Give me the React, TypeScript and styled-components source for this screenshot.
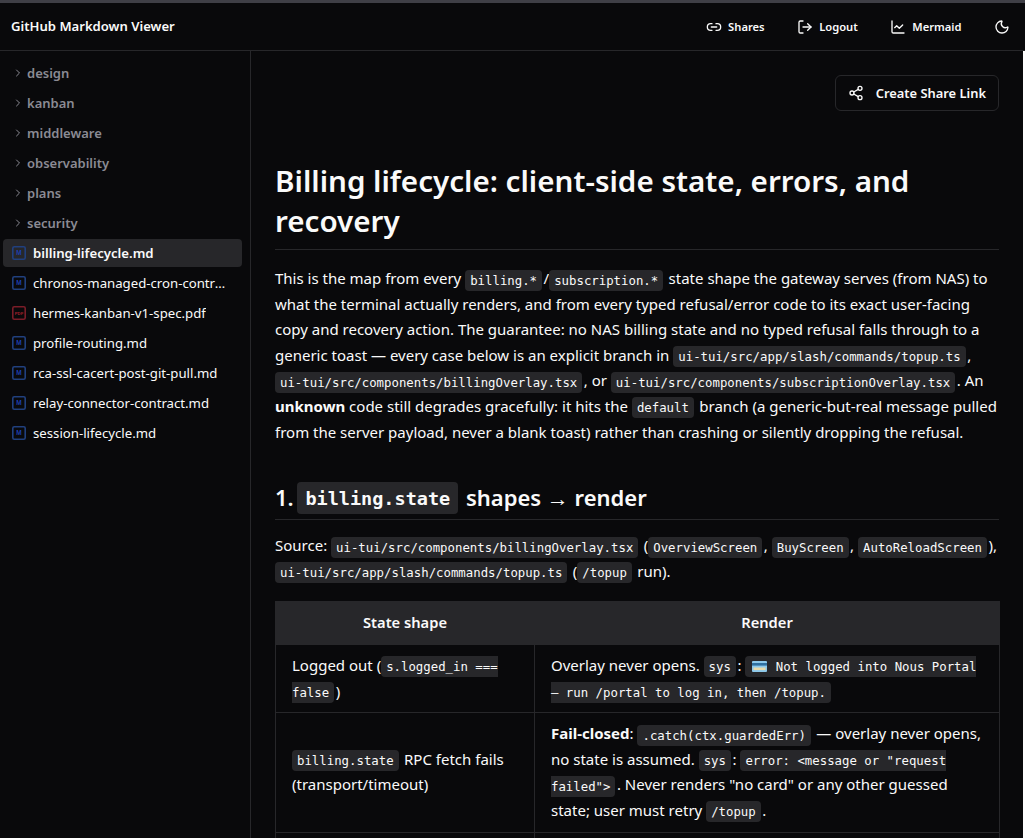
import styled, { createGlobalStyle } from "styled-components";
import { ChartLine, ChevronRight, Link2, LogOut, Moon, Share2 } from "lucide-react";

const GlobalStyle = createGlobalStyle`
    * {
        box-sizing: border-box;
    }

    body {
        margin: 0;
        background: #09090b;
        color: #fafafa;
        font-family: "Noto Sans", "Open Sans", sans-serif;
        font-size: 15px;
        line-height: 25.6px;
    }
`;

const folders = ["design", "kanban", "middleware", "observability", "plans", "security"];

const files = [
    { name: "billing-lifecycle.md", kind: "md", active: true },
    { name: "chronos-managed-cron-contract.md", kind: "md" },
    { name: "hermes-kanban-v1-spec.pdf", kind: "pdf" },
    { name: "profile-routing.md", kind: "md" },
    { name: "rca-ssl-cacert-post-git-pull.md", kind: "md" },
    { name: "relay-connector-contract.md", kind: "md" },
    { name: "session-lifecycle.md", kind: "md" },
];

const FileIcon = ({ kind }: { kind: string }) => {
    const stroke = kind === "pdf" ? "#7a1d28" : "#21407e";
    const fill = kind === "pdf" ? "#a3202c" : "#1d3fae";
    return (
        <FileSvg viewBox="0 0 14 14">
            <rect x="0.8" y="0.8" width="12.4" height="12.4" rx="1.5" fill="none" stroke={stroke} strokeWidth="1.6"/>
            <text x="7" y="9.2" textAnchor="middle" fontSize={kind === "pdf" ? 4.2 : 6.5} fontWeight="700" fill={fill}>
                {kind === "pdf" ? "PDF" : "M"}
            </text>
        </FileSvg>
    );
};

const CardEmoji = () => (
    <EmojiSvg viewBox="0 0 15 11">
        <rect x="0" y="0" width="15" height="11" rx="1" fill="#8cc8ea"/>
        <rect x="0" y="2" width="15" height="2.6" fill="#2f6f9f"/>
        <rect x="1.5" y="6.5" width="12" height="2.6" fill="#e8d9a8"/>
    </EmojiSvg>
);

export default function App() {
    return (
        <Page>
            <GlobalStyle/>
            <TopStrip/>
            <Header>
                <Title>GitHub Markdown Viewer</Title>
                <Nav>
                    <NavButton><Link2 size={16}/>Shares</NavButton>
                    <NavButton><LogOut size={16}/>Logout</NavButton>
                    <NavButton><ChartLine size={16}/>Mermaid</NavButton>
                    <NavButton><Moon size={16}/></NavButton>
                </Nav>
            </Header>
            <Body>
                <Sidebar>
                    {folders.map((name) => (
                        <FolderRow key={name}>
                            <ChevronRight size={12}/>
                            <span>{name}</span>
                        </FolderRow>
                    ))}
                    {files.map((file) => (
                        <FileRow key={file.name} $active={file.active}>
                            <FileIcon kind={file.kind}/>
                            <FileName>{file.name}</FileName>
                        </FileRow>
                    ))}
                </Sidebar>
                <Main>
                    <Actions>
                        <ShareButton><Share2 size={16}/>Create Share Link</ShareButton>
                    </Actions>
                    <H1>Billing lifecycle: client-side state, errors, and recovery</H1>
                    <Para>
                        This is the map from every <Code>billing.*</Code>/<Code>subscription.*</Code> state shape the
                        gateway serves (from NAS) to what the terminal actually renders, and from every typed
                        refusal/error code to its exact user-facing copy and recovery action. The guarantee: no NAS
                        billing state and no typed refusal falls through to a generic toast — every case below is an
                        explicit branch in <Code>ui-tui/src/app/slash/commands/topup.ts</Code>, <Code>ui-tui/src/components/billingOverlay.tsx</Code>,
                        or <Code>ui-tui/src/components/subscriptionOverlay.tsx</Code>. An <strong>unknown</strong> code
                        still degrades gracefully: it hits the <Code>default</Code> branch (a generic-but-real message
                        pulled from the server payload, never a blank toast) rather than crashing or silently dropping
                        the refusal.
                    </Para>
                    <H2>1. <HeadingCode>billing.state</HeadingCode> shapes → render</H2>
                    <Para>
                        Source: <Code>ui-tui/src/components/billingOverlay.tsx</Code> (<Code>OverviewScreen</Code>, <Code>BuyScreen</Code>, <Code>AutoReloadScreen</Code>), <Code>ui-tui/src/app/slash/commands/topup.ts</Code> (<Code>/topup</Code> run).
                    </Para>
                    <Table>
                        <thead>
                            <tr>
                                <Th $width={259}>State shape</Th>
                                <Th $width={465}>Render</Th>
                            </tr>
                        </thead>
                        <tbody>
                            <tr>
                                <Td>Logged out (<Code>s.logged_in === false</Code>)</Td>
                                <Td>
                                    Overlay never opens. <Code>sys</Code>: <Code><CardEmoji/> Not logged into Nous Portal — run /portal to log in, then /topup.</Code>
                                </Td>
                            </tr>
                            <tr>
                                <Td><Code>billing.state</Code> RPC fetch fails (transport/timeout)</Td>
                                <Td>
                                    <strong>Fail-closed</strong>: <Code>.catch(ctx.guardedErr)</Code> — overlay never opens,
                                    no state is assumed. <Code>sys</Code>: <Code>error: &lt;message or "request failed"&gt;</Code>.
                                    Never renders "no card" or any other guessed state; user must retry <Code>/topup</Code>.
                                </Td>
                            </tr>
                            <tr>
                                <Td/>
                                <Td/>
                            </tr>
                        </tbody>
                    </Table>
                </Main>
            </Body>
        </Page>
    );
}

const Page = styled.div`
    height: 838px;
    display: flex;
    flex-direction: column;
    overflow: hidden;
`;

const TopStrip = styled.div`
    height: 3px;
    background: #3f3f46;
    flex: none;
`;

const Header = styled.header`
    height: 48px;
    flex: none;
    display: flex;
    align-items: center;
    justify-content: space-between;
    padding: 0 15px 0 11px;
    border-bottom: 1px solid #27272a;
`;

const Title = styled.span`
    font-size: 13.1px;
    font-weight: 600;
`;

const Nav = styled.nav`
    display: flex;
    align-items: center;
    gap: 32.5px;
`;

const NavButton = styled.button`
    display: flex;
    align-items: center;
    gap: 6px;
    padding: 0;
    border: 0;
    background: none;
    color: #fafafa;
    font: 600 11.2px "Noto Sans", sans-serif;
`;

const Body = styled.div`
    flex: 1;
    display: flex;
    min-height: 0;
    background: #fff;
`;

const Sidebar = styled.aside`
    width: 251px;
    flex: none;
    display: flex;
    flex-direction: column;
    gap: 2px;
    padding: 8px 8px 0 3px;
    border-right: 1px solid #27272a;
    background: #09090b;
`;

const FolderRow = styled.div`
    height: 28px;
    display: flex;
    align-items: center;
    gap: 3px;
    padding: 2px 0 0 9px;
    color: #8b8b94;
    font-size: 13px;
    font-weight: 600;

    svg {
        margin-top: -2px;
    }
`;

const FileRow = styled.div<{ $active?: boolean }>`
    height: 28px;
    display: flex;
    align-items: center;
    gap: 7px;
    padding: 0 14px 0 9px;
    border-radius: 4px;
    font-size: 13.2px;
    color: #fafafa;
    font-weight: ${(p) => (p.$active ? 600 : 400)};
    background: ${(p) => (p.$active ? "#27272a" : "transparent")};
`;

const FileSvg = styled.svg`
    width: 14px;
    height: 14px;
    flex: none;
    font-family: "Liberation Sans", sans-serif;
`;

const FileName = styled.span`
    padding-top: 2px;
    overflow: hidden;
    white-space: nowrap;
    text-overflow: ellipsis;
`;

const Main = styled.main`
    width: 772px;
    flex: none;
    padding: 24px 24px 0;
    overflow: hidden;
    background: #09090b;
`;

const Actions = styled.div`
    display: flex;
    justify-content: flex-end;
    margin-bottom: 50px;
`;

const ShareButton = styled.button`
    height: 36px;
    display: flex;
    align-items: center;
    gap: 12px;
    padding: 0 12px;
    border: 1px solid #27272a;
    border-radius: 6px;
    background: #09090b;
    color: #fafafa;
    font: 600 12.9px "Noto Sans", sans-serif;
`;

const H1 = styled.h1`
    margin: 0 0 16px;
    padding-bottom: 8px;
    border-bottom: 1px solid #27272a;
    font-size: 29.6px;
    font-weight: 600;
    line-height: 40px;
`;

const H2 = styled.h2`
    margin: 32px 0 13px;
    padding-bottom: 2px;
    border-bottom: 1px solid #27272a;
    font-size: 22px;
    font-weight: 600;
    line-height: 40px;
`;

const Para = styled.p`
    margin: 0 0 16px;
`;

const Code = styled.code`
    margin-right: 1.5px;
    padding: 3.5px 5px;
    border-radius: 4px;
    background: #27272a;
    font-family: "DejaVu Sans Mono", monospace;
    font-size: 12.35px;
    line-height: 1;
`;

const HeadingCode = styled(Code)`
    margin: 0 2px 0 -2px;
    padding: 5.5px 8px;
    font-size: 18.5px;
    font-weight: 700;
    vertical-align: 1.5px;
`;

const Table = styled.table`
    width: 724px;
    margin-top: 17px;
    table-layout: fixed;
    border-collapse: collapse;
`;

const Th = styled.th<{ $width: number }>`
    width: ${(p) => p.$width}px;
    padding: 8px 16px;
    border: 1px solid #27272a;
    background: #27272a;
    font-size: 14.7px;
    font-weight: 600;
`;

const Td = styled.td`
    padding: 8px 16px;
    border: 1px solid #27272a;
`;

const EmojiSvg = styled.svg`
    width: 15px;
    height: 11px;
    margin: 0 1px 0 2px;
    vertical-align: -1px;
`;
